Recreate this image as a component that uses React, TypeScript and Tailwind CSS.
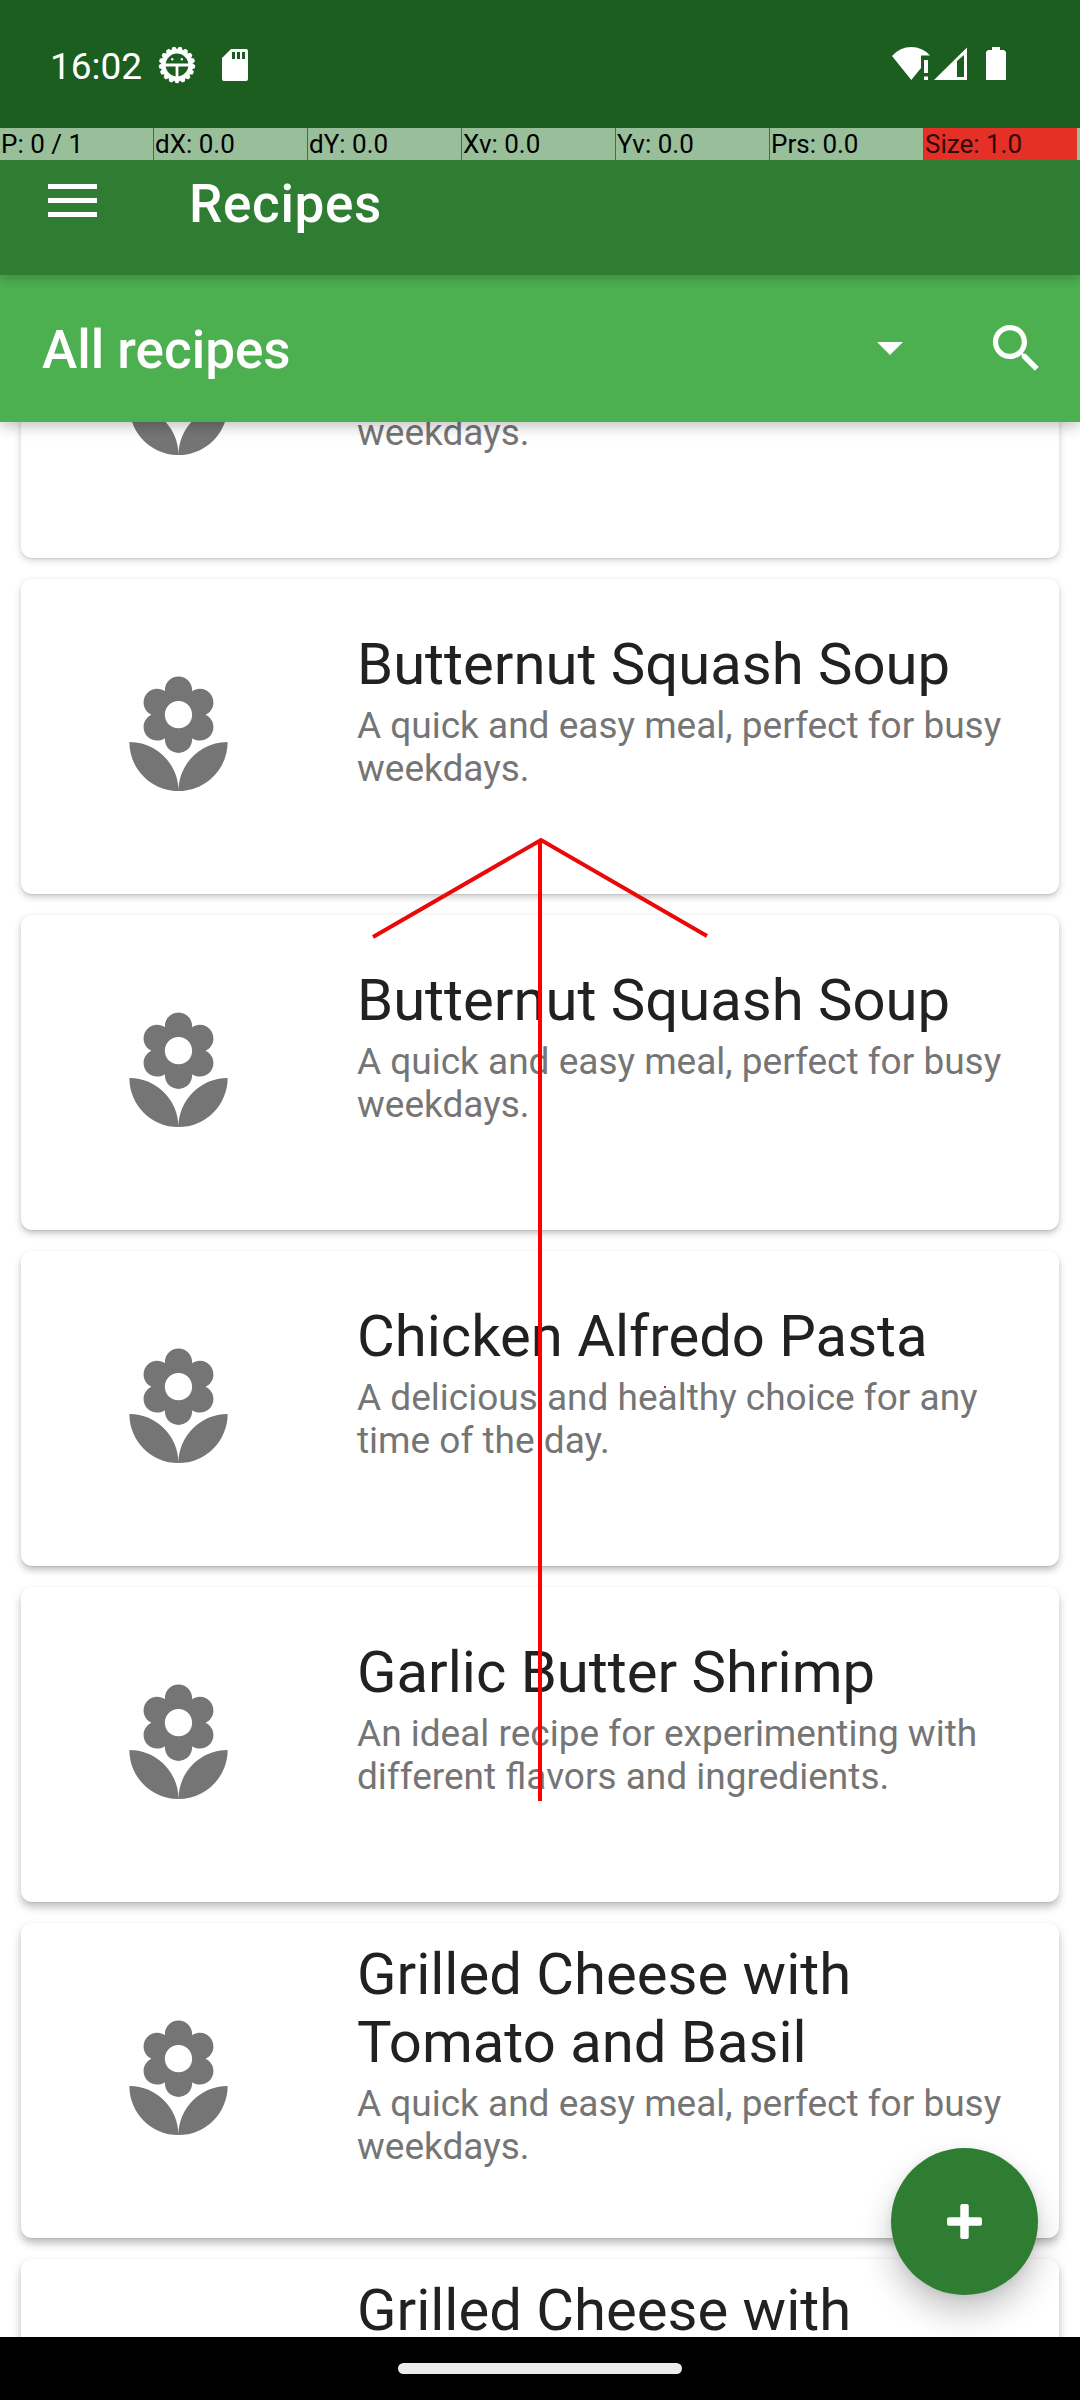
const recipes = [
  { title: ["Butternut Squash Soup"], text: ["A quick and easy meal, perfect for busy", "weekdays."], shadow: "shadow-[0_2px_7px_rgba(0,0,0,0.2),0_1px_1px_rgba(0,0,0,0.08)]" },
  { title: ["Butternut Squash Soup"], text: ["A quick and easy meal, perfect for busy", "weekdays."], shadow: "shadow-[0_3px_7px_rgba(0,0,0,0.22),0_1px_1px_rgba(0,0,0,0.08)]" },
  { title: ["Butternut Squash Soup"], text: ["A quick and easy meal, perfect for busy", "weekdays."], shadow: "shadow-[0_3px_7px_rgba(0,0,0,0.25),0_1px_1px_rgba(0,0,0,0.08)]" },
  { title: ["Chicken Alfredo Pasta"], text: ["A delicious and healthy choice for any", "time of the day."], shadow: "shadow-[0_4px_7px_rgba(0,0,0,0.25),0_1px_1px_rgba(0,0,0,0.08)]" },
  { title: ["Garlic Butter Shrimp"], text: ["An ideal recipe for experimenting with", "different flavors and ingredients."], shadow: "shadow-[0_5px_8px_rgba(0,0,0,0.26),0_1px_1px_rgba(0,0,0,0.06)]" },
  { title: ["Grilled Cheese with", "Tomato and Basil"], text: ["A quick and easy meal, perfect for busy", "weekdays."], shadow: "shadow-[0_5px_8px_rgba(0,0,0,0.28),0_1px_1px_rgba(0,0,0,0.06)]" },
  { title: ["Grilled Cheese with", "Tomato and Basil"], text: ["A quick and easy meal, perfect for busy", "weekdays."], shadow: "shadow-[0_5px_8px_rgba(0,0,0,0.28),0_1px_1px_rgba(0,0,0,0.06)]" },
];

const pointerCells = ["P: 0 / 1", "dX: 0.0", "dY: 0.0", "Xv: 0.0", "Yv: 0.0"];

function Flower() {
  return (
    <svg viewBox="0 0 24 24" className="size-[131px] fill-[#757575]">
      <path d="M12 22c4.97 0 9-4.03 9-9-4.97 0-9 4.03-9 9zM5.6 10.25c0 1.38 1.12 2.5 2.5 2.5.53 0 1.01-.16 1.42-.44l-.02.19c0 1.38 1.12 2.5 2.5 2.5s2.5-1.12 2.5-2.5l-.02-.19c.4.28.89.44 1.42.44 1.38 0 2.5-1.12 2.5-2.5 0-1-.59-1.85-1.43-2.25.84-.4 1.43-1.25 1.43-2.25 0-1.38-1.12-2.5-2.5-2.5-.53 0-1.01.16-1.42.44l.02-.19C14.5 2.12 13.38 1 12 1S9.5 2.12 9.5 3.5l.02.19c-.4-.28-.89-.44-1.42-.44-1.38 0-2.5 1.12-2.5 2.5 0 1 .59 1.85 1.43 2.25-.84.4-1.43 1.25-1.43 2.25zM12 5.5c1.38 0 2.5 1.12 2.5 2.5s-1.12 2.5-2.5 2.5S9.500 9.380 9.500 8s1.12-2.5 2.5-2.5zM3 13c0 4.970 4.030 9 9 9 0-4.970-4.030-9-9-9z" />
    </svg>
  );
}

function GearFace() {
  return (
    <svg viewBox="-20 -20 40 40" className="mt-px size-10">
      {Array.from({ length: 17 }, (_, i) => (
        <path key={i} d="M-3 14L-1.200 17.700H1.200L3 14Z" fill="#fff" stroke="#fff" strokeWidth="1" strokeLinejoin="round" transform={`rotate(${(i * 360) / 17})`} />
      ))}
      <circle r="13.300" fill="none" stroke="#fff" strokeWidth="3.800" />
      <path d="M-12 0H12M0 0V12" stroke="#fff" strokeWidth="2.800" />
      <circle cx="-4.800" cy="-5.700" r="1.200" fill="#fff" />
      <circle cx="4.800" cy="-5.700" r="1.200" fill="#fff" />
    </svg>
  );
}

export default function App() {
  return (
    <div className="relative flex h-[2400px] w-[1080px] flex-col overflow-hidden bg-white font-['Roboto',sans-serif]">
      <header className="relative z-30 h-[275px] shrink-0 bg-[#2e7d32] shadow-[0_4px_10px_rgba(0,0,0,0.2)]">
        <div className="flex h-32 items-start bg-[#1b5e20] pl-[50px] pt-[44px] text-white">
          <span className="mt-px w-[107px] whitespace-nowrap text-[37px] leading-[43px]">16:02</span>
          <GearFace />
          <svg viewBox="0 0 26 32" className="ml-[25px] mt-[5px] h-8 w-[26px]">
            <path fillRule="evenodd" fill="#fff" d="M9 0H24Q26 0 26 2V30Q26 32 24 32H2Q0 32 0 30V9ZM10 3V10H13V3ZM15 3V10H18V3ZM20 3V10H23V3Z" />
          </svg>
          <svg viewBox="0 0 120 34" className="ml-[642px] mt-[3px] h-[34px] w-[120px]" fill="#fff">
            <path d="M2 9Q10 0 21.300 0T40 8.500H31V21L21.300 33Z" />
            <path d="M34 13H38V26H34ZM34 29.500H38V33H34Z" />
            <path fillRule="evenodd" d="M44 33L77 .5V33ZM67 14V30H74V8Z" />
            <path d="M102 0H110V3H114L116 5V33H96V5L98 3H102Z" />
          </svg>
        </div>
        <div className="flex h-8 text-[26px] leading-[32px] text-black">
          {pointerCells.map((c) => (
            <div key={c} className="mr-px w-[153px] shrink-0 whitespace-nowrap bg-[#98bf9a] pl-px last-of-type:mr-0">{c}</div>
          ))}
          <div className="-ml-px w-px shrink-0 bg-[#a3431f]" />
          <div className="mr-px w-[153px] shrink-0 bg-[#98bf9a] pl-px">Prs: 0.0</div>
          <div className="w-[153px] shrink-0 bg-[#e53028] pl-px text-[#2d0907]">Size: 1.0</div>
          <div className="flex-1 bg-[#98bf9a]" />
        </div>
        <div className="flex items-start">
          <svg viewBox="0 0 49 33" className="ml-12 mt-6 h-[33px] w-[49px] fill-white">
            <path d="M0 0H49V5H0ZM0 14H49V19H0ZM0 28H49V33H0Z" />
          </svg>
          <h1 className="ml-[92px] mt-[13px] text-[53px] font-medium leading-[62px] tracking-[0.66px] text-white">Recipes</h1>
        </div>
      </header>

      <div className="relative z-20 flex h-[147px] shrink-0 items-center bg-[#4caf50] pl-[42px] pr-8 text-white shadow-[0_4px_14px_rgba(0,0,0,0.25)]">
        <span className="flex-1 pt-[2px] text-[53px] font-medium leading-[62px]">All recipes</span>
        <svg viewBox="0 0 26 13" className="mr-[82px] h-[13px] w-[26px] fill-white"><path d="M0 0H26L13 13Z" /></svg>
        <svg viewBox="0 0 24 24" className="mb-px size-[63px] fill-white">
          <path d="M15.500 14h-.79l-.28-.27C15.410 12.590 16 11.110 16 9.500 16 5.910 13.090 3 9.500 3S3 5.910 3 9.500 5.910 16 9.500 16c1.610 0 3.090-.59 4.230-1.570l.27.28v.79l5 4.990L20.490 19l-4.990-5zm-6 0C7.010 14 5 11.990 5 9.500S7.010 5 9.500 5 14 7.010 14 9.500 11.990 14 9.500 14z" />
        </svg>
      </div>

      <main className="flex h-[1915px] shrink-0 flex-col justify-start overflow-hidden px-[21px]">
        <div className="-mt-[179px] flex flex-col gap-[21px]">
          {recipes.map((r, i) => (
            <article key={i} className={`flex h-[315px] shrink-0 rounded-[11px] bg-white ${r.shadow}`}>
              <div className="flex w-[315px] shrink-0 items-center justify-center"><Flower /></div>
              <div className="ml-[21px] flex flex-col justify-center whitespace-nowrap pb-[53px]">
                <h2 className="mb-[6px] text-[58px] leading-[68px] text-[#212121]">
                  {r.title.map((l) => <span key={l} className="block">{l}</span>)}
                </h2>
                <p className="text-[37px] leading-[43px] text-[#757575]">
                  {r.text.map((l) => <span key={l} className="block">{l}</span>)}
                </p>
              </div>
            </article>
          ))}
        </div>
      </main>

      <button className="absolute left-[891px] top-[2148px] z-10 flex size-[147px] items-center justify-center rounded-full bg-[#2e7d32] shadow-[0_18px_32px_rgba(0,0,0,0.22),0_2px_10px_rgba(0,0,0,0.08)]">
        <svg viewBox="0 0 35 35" className="size-[35px] fill-white">
          <rect x="13.250" width="8.500" height="35" rx="2" />
          <rect y="13.250" width="35" height="8.500" rx="2" />
        </svg>
      </button>

      <footer className="relative z-20 flex h-[63px] shrink-0 items-start justify-center bg-black pt-[26px]">
        <div className="h-[11px] w-[284px] rounded-full bg-[#ebebeb]" />
      </footer>

      <svg viewBox="0 0 1080 2400" className="pointer-events-none absolute inset-0 z-40 h-[2400px] w-[1080px]" fill="none" strokeWidth="4">
        <path d="M373 937L541 840L707 936" stroke="#ea0808" />
        <path d="M540 840V1801" stroke="#ff0000" />
        <rect x="664" y="1386" width="2" height="2" fill="#c02838" />
      </svg>
    </div>
  );
}
